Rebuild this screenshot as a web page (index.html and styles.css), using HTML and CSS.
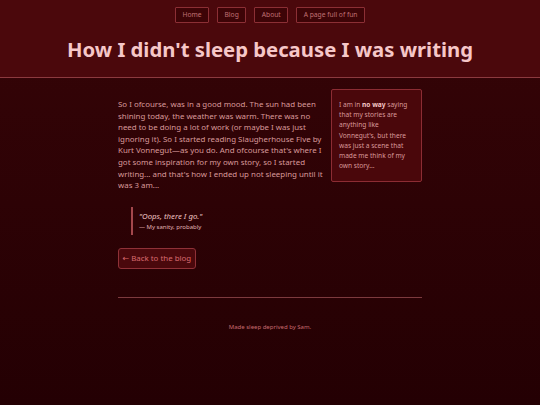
FILE: index.html
```html
<!DOCTYPE html>
<html>
<head>
<meta charset="utf-8">
<link rel="stylesheet" href="styles.css">
</head>
<body>
<header class="site-header">
  <nav class="nav">
    <a class="nav-link" href="#">Home</a>
    <a class="nav-link" href="#">Blog</a>
    <a class="nav-link" href="#">About</a>
    <a class="nav-link" href="#">A page full of fun</a>
  </nav>
  <h1 class="title">How I didn't sleep because I was writing</h1>
</header>
<main class="main">
  <div class="row">
    <p class="text">So I ofcourse, was in a good mood. The sun had been shining today, the weather was warm. There was no need to be doing a lot of work (or maybe I was just ignoring it). So I started reading Slaugherhouse Five by Kurt Vonnegut—as you do. And ofcourse that's where I got some inspiration for my own story, so I started writing... and that's how I ended up not sleeping until it was 3 am...</p>
    <aside class="aside">I am in <strong>no way</strong> saying that my stories are anything like Vonnegut's, but there was just a scene that made me think of my own story...</aside>
  </div>
  <blockquote class="quote">
    <p class="quote-text">"Oops, there I go."</p>
    <p class="quote-cite">— My sanity, probably</p>
  </blockquote>
  <a class="back" href="#">← Back to the blog</a>
  <hr class="rule">
  <footer class="footer">Made sleep deprived by Sam.</footer>
</main>
</body>
</html>
```
FILE: styles.css
```css
html, body { margin: 0; padding: 0; }
body {
  font-family: "Noto Sans", "DejaVu Sans", sans-serif;
  background: linear-gradient(#360407, #240003);
  min-height: 405px;
  color: #d99a9a;
}
.site-header {
  background: #4b080c;
  border-bottom: 1px solid #8c3a3f;
  height: 78px;
  box-sizing: border-box;
  padding-top: 7px;
}
.nav {
  display: flex;
  justify-content: center;
  gap: 8px;
}
.nav-link {
  display: block;
  font-size: 6.7px;
  line-height: 14px;
  padding: 0 6.5px;
  border: 1px solid #8c2f35;
  border-radius: 1px;
  background: #3d0407;
  color: #c07074;
  text-decoration: none;
}
.title {
  margin: 12px 0 0;
  text-align: center;
  font-size: 20.3px;
  font-weight: 700;
  color: #f6c7c8;
  line-height: 28px;
}
.main {
  width: 304px;
  margin: 0 auto;
  padding-top: 11px;
}
.row {
  display: flex;
  align-items: flex-start;
  gap: 8px;
}
.text {
  flex: 1;
  margin: 10px 0 0;
  font-size: 7.9px;
  line-height: 11.6px;
  color: #d9999a;
}
.aside {
  width: 91px;
  box-sizing: border-box;
  padding: 10px 6px 10px 7px;
  background: #4a070b;
  border: 1px solid #8c2c33;
  border-radius: 2px;
  font-size: 6.6px;
  line-height: 10.2px;
  color: #d9999a;
}
.aside strong { color: #f6c7c8; }
.quote {
  margin: 15px 0 0 13px;
  padding: 3px 0 3px 6px;
  border-left: 2px solid #a3474c;
}
.quote-text {
  margin: 0;
  font-style: italic;
  font-size: 7.8px;
  line-height: 12px;
  color: #efc2c3;
}
.quote-cite {
  margin: 1px 0 0;
  font-size: 6px;
  line-height: 9px;
  color: #e1b4b5;
}
.back {
  display: inline-block;
  margin-top: 13px;
  padding: 0 3.5px;
  line-height: 19px;
  font-size: 7.9px;
  color: #d86a6e;
  background: #4a080c;
  border: 1px solid #8f3137;
  border-radius: 3px;
  text-decoration: none;
}
.rule {
  margin: 28px 0 0;
  border: 0;
  border-top: 1.5px solid #7d3a3e;
}
.footer {
  margin-top: 25px;
  text-align: center;
  font-size: 6px;
  color: #c86a6e;
}
```
